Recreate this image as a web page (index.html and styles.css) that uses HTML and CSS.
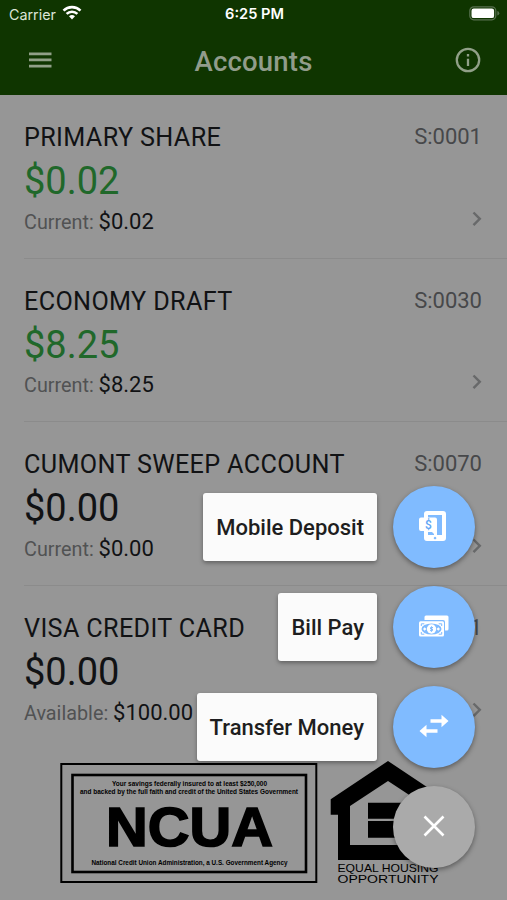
FILE: index.html
```html
<!DOCTYPE html>
<html lang="en">
  <head>
    <meta charset="UTF-8" />
    <meta name="viewport" content="width=device-width, initial-scale=1.0" />
    <title>Accounts</title>
    <link rel="stylesheet" href="styles.css">
  </head>
  <body>
    <header class="header">
      <div class="status-bar">
        <div class="carrier">
          <span>Carrier</span>
          <svg width="20" height="15" viewBox="0 0 20 15" fill="none" stroke="#fff" stroke-width="2.6">
            <path d="M1.5 5.6a12.2 12.2 0 0 1 17 0M4.6 8.9a7.8 7.8 0 0 1 10.8 0" />
            <path d="M10 14.5l-3-3.2a4.4 4.4 0 0 1 6 0z" fill="#fff" stroke="none" />
          </svg>
        </div>
        <div class="time">6:25 PM</div>
        <svg class="battery" width="31" height="15" viewBox="0 0 31 15">
          <rect x=".8" y=".8" width="26" height="13" rx="4" fill="none" stroke="#58704f" stroke-width="1.2" />
          <rect x="2.5" y="2.5" width="22.6" height="9.6" rx="2.2" fill="#fff" />
          <path d="M28.3 5v4.6q2-.6 2-2.3t-2-2.3z" fill="#58704f" />
        </svg>
      </div>
      <div class="nav-bar">
        <svg width="24" height="18" viewBox="0 0 24 18" fill="#91a088">
          <path d="M1 1.500h22.500v2.700H1zM1 7.600h22.500v2.700H1zM1 13.700h22.500v2.700H1z" />
        </svg>
        <h1>Accounts</h1>
        <svg width="26" height="26" viewBox="0 0 26 26" fill="none" stroke="#91a088" stroke-width="2.3">
          <circle cx="13" cy="13" r="11.2" />
          <path d="M13 11.800v7.200M13 7v2.500" />
        </svg>
      </div>
    </header>

    <main class="accounts">
      <section class="account">
        <div class="account-top"><h2>PRIMARY SHARE</h2><span class="suffix">S:0001</span></div>
        <div class="amount positive">$0.02</div>
        <div class="detail">
          <span>Current: <b>$0.02</b></span>
          <svg class="chevron" viewBox="0 0 10 16"><path d="M1.5 1.5l6.3 6.3-6.3 6.3" /></svg>
        </div>
      </section>
      <section class="account">
        <div class="account-top"><h2>ECONOMY DRAFT</h2><span class="suffix">S:0030</span></div>
        <div class="amount positive">$8.25</div>
        <div class="detail">
          <span>Current: <b>$8.25</b></span>
          <svg class="chevron" viewBox="0 0 10 16"><path d="M1.5 1.5l6.3 6.3-6.3 6.3" /></svg>
        </div>
      </section>
      <section class="account">
        <div class="account-top"><h2>CUMONT SWEEP ACCOUNT</h2><span class="suffix">S:0070</span></div>
        <div class="amount">$0.00</div>
        <div class="detail">
          <span>Current: <b>$0.00</b></span>
          <svg class="chevron" viewBox="0 0 10 16"><path d="M1.5 1.5l6.3 6.3-6.3 6.3" /></svg>
        </div>
      </section>
      <section class="account">
        <div class="account-top"><h2>VISA CREDIT CARD</h2><span class="suffix">1</span></div>
        <div class="amount">$0.00</div>
        <div class="detail">
          <span>Available: <b>$100.00</b></span>
          <svg class="chevron" viewBox="0 0 10 16"><path d="M1.5 1.5l6.3 6.3-6.3 6.3" /></svg>
        </div>
      </section>
    </main>

    <footer class="logos">
      <svg width="257" height="121" viewBox="0 0 257 121">
        <rect x="1.3" y="1" width="255" height="118" fill="none" stroke="#000" stroke-width="2" />
        <rect x="12.5" y="12" width="233.5" height="97" fill="none" stroke="#000" stroke-width="2.6" />
        <g class="ncua-text">
          <text x="52" y="22.7" textLength="155" lengthAdjust="spacingAndGlyphs">Your savings federally insured to at least $250,000</text>
          <text x="20" y="31" textLength="218" lengthAdjust="spacingAndGlyphs">and backed by the full faith and credit of the United States Government</text>
          <text x="31.5" y="102" textLength="196" lengthAdjust="spacingAndGlyphs">National Credit Union Administration, a U.S. Government Agency</text>
          <text class="ncua-name" x="46" y="83" textLength="167" lengthAdjust="spacingAndGlyphs">NCUA</text>
        </g>
      </svg>
      <svg width="116" height="124" viewBox="330 760 116 124">
        <path fill-rule="evenodd" d="M388 760l57.300 38.300v15.400H438V859H338v-45.300h-7.300v-15.400zM388 780l-38 25v39h76v-39z" />
        <path d="M368 801.700h40v16h-40zM368 820h40v16.700h-40z" />
        <text class="housing" x="337.5" y="870.5" textLength="101" lengthAdjust="spacingAndGlyphs">EQUAL HOUSING</text>
        <text class="housing" x="337.5" y="882" textLength="101" lengthAdjust="spacingAndGlyphs">OPPORTUNITY</text>
      </svg>
    </footer>

    <div class="fab-menu">
      <div class="fab-row">
        <span class="fab-label">Mobile Deposit</span>
        <button class="fab" aria-label="Mobile Deposit">
          <svg width="30" height="30" viewBox="0 0 30 30">
            <path fill="#fff" fill-rule="evenodd" d="M8 0h16a3 3 0 0 1 3 3v24a3 3 0 0 1-3 3H8a3 3 0 0 1-3-3v-7H2a2 2 0 0 1-2-2V8.500a2 2 0 0 1 2-2h3V3a3 3 0 0 1 3-3zM9 4v2.500h7a2 2 0 0 1 2 2V24h5V4zM9 21v3h6v-1l-2-2zM16 25.700a1.300 1.300 0 1 0 .1 0z" />
            <text class="icon-dollar" x="9.5" y="17.500" text-anchor="middle">$</text>
          </svg>
        </button>
      </div>
      <div class="fab-row">
        <span class="fab-label">Bill Pay</span>
        <button class="fab" aria-label="Bill Pay">
          <svg width="30" height="22" viewBox="0 0 30 22">
            <path d="M5.500 4V2A1.500 1.500 0 0 1 7 .5h21a1.500 1.500 0 0 1 1.500 1.500v12a1.500 1.500 0 0 1-1.500 1.500h-2V7a2 2 0 0 0-2-2H5.500z" fill="#fff" />
            <rect x="0" y="6.300" width="25" height="15.200" rx="1.500" fill="#fff" />
            <ellipse cx="12.500" cy="14" rx="10" ry="5.600" fill="#80bbff" />
            <circle cx="12.500" cy="14" r="4.700" fill="#fff" />
            <path d="M4 14l1.700-1.700L7.400 14l-1.700 1.700zM17.600 14l1.700-1.700L21 14l-1.700 1.700z" fill="#fff" />
            <path d="M2.300 11V8.800h3M19.700 8.800h3V11M2.300 17v2.200h3M19.700 19.200h3V17" fill="none" stroke="#80bbff" />
            <path d="M14 12.500h-2.500v1.500h2v1.600H11M12.500 11.300v5.500" fill="none" stroke="#80bbff" />
          </svg>
        </button>
      </div>
      <div class="fab-row">
        <span class="fab-label">Transfer Money</span>
        <button class="fab" aria-label="Transfer Money">
          <svg width="30" height="24" viewBox="0 0 30 24" fill="#fff">
            <path d="M11.500 5.300h11V.8l7 6.200-7 6.200V8.700h-11zM18.500 15.300h-11v-4.500l-7 6.200 7 6.200v-4.500h11z" />
          </svg>
        </button>
      </div>
      <button class="fab fab-close" aria-label="Close">
        <svg width="22" height="22" viewBox="0 0 22 22" fill="none" stroke="#fff" stroke-width="2.6">
          <path d="M1.500 1.500l19 19M20.500 1.500l-19 19" />
        </svg>
      </button>
    </div>
  </body>
</html>
```
FILE: styles.css
```css
* {
  box-sizing: border-box;
}
body {
  margin: 0;
  height: 900px;
  overflow: hidden;
  background-color: #969696;
  color: #111214;
  font-family: Roboto, "Liberation Sans", sans-serif;
  position: relative;
}
h1,
h2 {
  margin: 0;
}
svg {
  display: block;
  flex: none;
  overflow: visible;
}
.header {
  height: 95px;
  background-color: #0f3500;
}
.status-bar {
  height: 28px;
  display: grid;
  grid-template-columns: 1fr auto 1fr;
  align-items: center;
  padding: 0 7px 0 9px;
  font-family: Inter, sans-serif;
  font-size: 14.3px;
  color: #fff;
}
.carrier {
  display: flex;
  align-items: center;
  gap: 6px;
  color: #dce4d8;
}
.carrier svg {
  margin-top: -4px;
}
.time {
  font-weight: 600;
  font-size: 14.6px;
}
.battery {
  justify-self: end;
  margin-top: -2px;
}
.nav-bar {
  height: 64px;
  display: flex;
  align-items: center;
  justify-content: space-between;
  padding: 0 26px 0 28px;
}
.nav-bar h1 {
  font-size: 27.5px;
  font-weight: 500;
  letter-spacing: 0.2px;
  line-height: 32px;
  margin-top: 3px;
  color: #919c8b;
}
.account {
  height: 163.7px;
  margin-left: 24px;
  padding: 27px 25px 0 0;
  border-bottom: 1px solid #8b8b8b;
}
.account:last-child {
  border-bottom: none;
}
.account-top,
.detail {
  display: flex;
  justify-content: space-between;
}
.account-top {
  height: 32px;
  line-height: 32px;
}
.account h2 {
  font-size: 25.2px;
  font-weight: 400;
  letter-spacing: 0.35px;
}
.suffix {
  font-size: 22px;
  line-height: 30px;
  color: #47484a;
}
.amount {
  height: 54px;
  line-height: 54px;
  font-size: 38px;
}
.positive {
  color: #20682a;
}
.detail {
  height: 28px;
  align-items: center;
  font-size: 19.8px;
  line-height: 28px;
  color: #515253;
}
.detail b {
  font-size: 22px;
  font-weight: 400;
  color: #111214;
}
.chevron {
  width: 10px;
  height: 16px;
  margin-top: -7px;
  fill: none;
  stroke: #68696a;
  stroke-width: 2.4;
}
.logos {
  display: flex;
  gap: 13px;
  margin-left: 60px;
  margin-top: 13px;
}
.logos svg:last-child {
  margin-top: -2px;
}
.ncua-text {
  font-family: "Liberation Sans", sans-serif;
  font-weight: bold;
  font-size: 7.8px;
}
.ncua-name {
  font-size: 55px;
  stroke: #000;
  stroke-width: 1.6;
}
.housing {
  font-family: "Liberation Sans", sans-serif;
  font-size: 11.6px;
}
.fab-menu {
  position: absolute;
  right: 32px;
  top: 486px;
  display: flex;
  flex-direction: column;
  align-items: flex-end;
  gap: 18px;
}
.fab-row {
  display: flex;
  align-items: center;
  gap: 16px;
}
.fab-label {
  height: 68px;
  padding: 0 13px;
  border-radius: 3px;
  background-color: #fbfbfb;
  box-shadow: 0 2px 4px rgba(0, 0, 0, 0.35);
  color: #1e1e20;
  font-size: 22px;
  font-weight: 500;
  line-height: 69px;
}
.fab {
  width: 82px;
  height: 82px;
  padding: 0 0 2px;
  border: none;
  border-radius: 50%;
  display: flex;
  align-items: center;
  justify-content: center;
  background-color: #80bbff;
  box-shadow: 0 2px 5px rgba(0, 0, 0, 0.4);
}
.fab-close {
  background-color: #aaa;
}
.icon-dollar {
  font-family: Roboto, sans-serif;
  font-size: 12px;
  font-weight: 500;
  fill: #60a5f5;
}
```
